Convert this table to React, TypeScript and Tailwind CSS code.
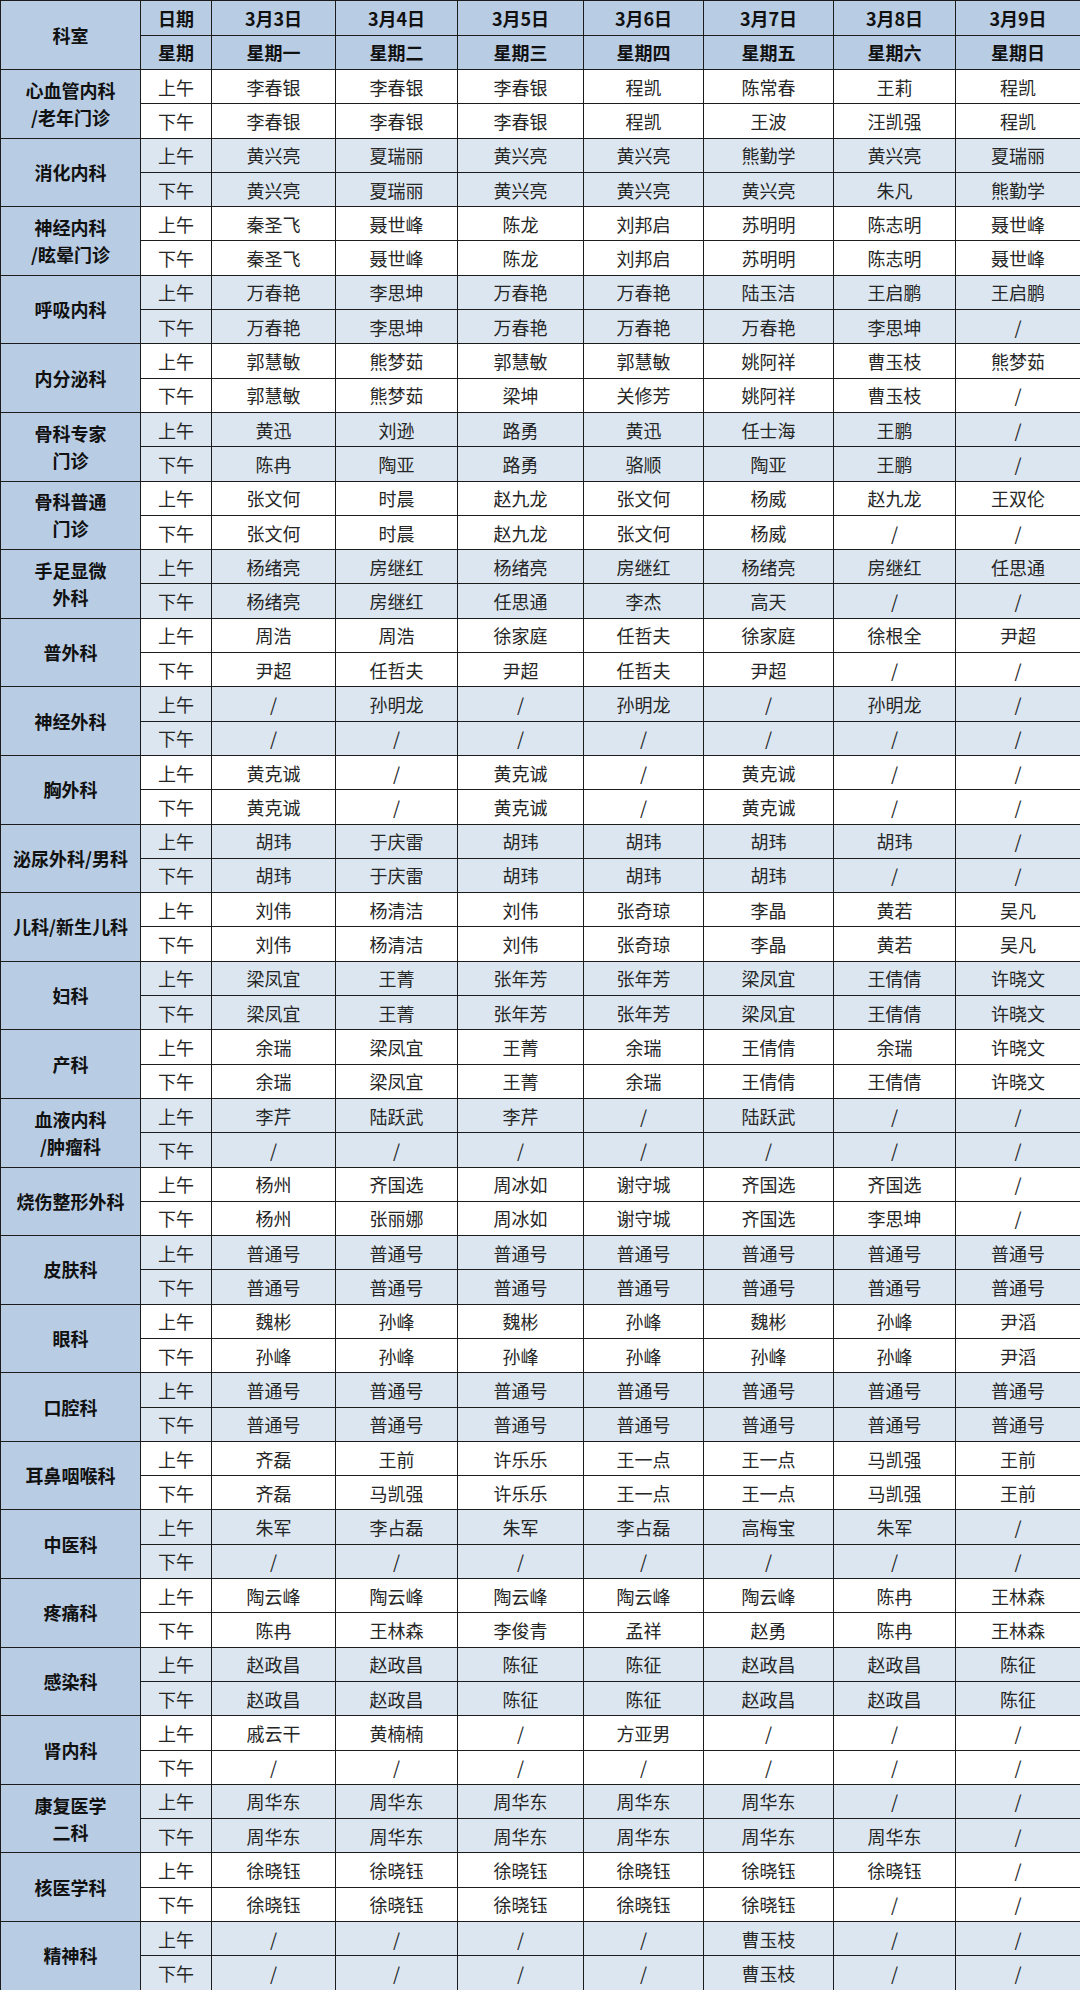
import React from 'react';

type Dept = { name: string[]; am: string[]; pm: string[] };

const S = '/';
const dates = ['3月3日', '3月4日', '3月5日', '3月6日', '3月7日', '3月8日', '3月9日'];
const weekdays = ['星期一', '星期二', '星期三', '星期四', '星期五', '星期六', '星期日'];
const colWidths = [140, 71, 124, 122, 126, 120, 130, 122, 125];

const depts: Dept[] = [
  {
    name: ['心血管内科', '/老年门诊'],
    am: ['李春银', '李春银', '李春银', '程凯', '陈常春', '王莉', '程凯'],
    pm: ['李春银', '李春银', '李春银', '程凯', '王波', '汪凯强', '程凯'],
  },
  {
    name: ['消化内科'],
    am: ['黄兴亮', '夏瑞丽', '黄兴亮', '黄兴亮', '熊勤学', '黄兴亮', '夏瑞丽'],
    pm: ['黄兴亮', '夏瑞丽', '黄兴亮', '黄兴亮', '黄兴亮', '朱凡', '熊勤学'],
  },
  {
    name: ['神经内科', '/眩晕门诊'],
    am: ['秦圣飞', '聂世峰', '陈龙', '刘邦启', '苏明明', '陈志明', '聂世峰'],
    pm: ['秦圣飞', '聂世峰', '陈龙', '刘邦启', '苏明明', '陈志明', '聂世峰'],
  },
  {
    name: ['呼吸内科'],
    am: ['万春艳', '李思坤', '万春艳', '万春艳', '陆玉洁', '王启鹏', '王启鹏'],
    pm: ['万春艳', '李思坤', '万春艳', '万春艳', '万春艳', '李思坤', S],
  },
  {
    name: ['内分泌科'],
    am: ['郭慧敏', '熊梦茹', '郭慧敏', '郭慧敏', '姚阿祥', '曹玉枝', '熊梦茹'],
    pm: ['郭慧敏', '熊梦茹', '梁坤', '关修芳', '姚阿祥', '曹玉枝', S],
  },
  {
    name: ['骨科专家', '门诊'],
    am: ['黄迅', '刘逊', '路勇', '黄迅', '任士海', '王鹏', S],
    pm: ['陈冉', '陶亚', '路勇', '骆顺', '陶亚', '王鹏', S],
  },
  {
    name: ['骨科普通', '门诊'],
    am: ['张文何', '时晨', '赵九龙', '张文何', '杨威', '赵九龙', '王双伦'],
    pm: ['张文何', '时晨', '赵九龙', '张文何', '杨威', S, S],
  },
  {
    name: ['手足显微', '外科'],
    am: ['杨绪亮', '房继红', '杨绪亮', '房继红', '杨绪亮', '房继红', '任思通'],
    pm: ['杨绪亮', '房继红', '任思通', '李杰', '高天', S, S],
  },
  {
    name: ['普外科'],
    am: ['周浩', '周浩', '徐家庭', '任哲夫', '徐家庭', '徐根全', '尹超'],
    pm: ['尹超', '任哲夫', '尹超', '任哲夫', '尹超', S, S],
  },
  {
    name: ['神经外科'],
    am: [S, '孙明龙', S, '孙明龙', S, '孙明龙', S],
    pm: [S, S, S, S, S, S, S],
  },
  {
    name: ['胸外科'],
    am: ['黄克诚', S, '黄克诚', S, '黄克诚', S, S],
    pm: ['黄克诚', S, '黄克诚', S, '黄克诚', S, S],
  },
  {
    name: ['泌尿外科/男科'],
    am: ['胡玮', '于庆雷', '胡玮', '胡玮', '胡玮', '胡玮', S],
    pm: ['胡玮', '于庆雷', '胡玮', '胡玮', '胡玮', S, S],
  },
  {
    name: ['儿科/新生儿科'],
    am: ['刘伟', '杨清洁', '刘伟', '张奇琼', '李晶', '黄若', '吴凡'],
    pm: ['刘伟', '杨清洁', '刘伟', '张奇琼', '李晶', '黄若', '吴凡'],
  },
  {
    name: ['妇科'],
    am: ['梁凤宜', '王菁', '张年芳', '张年芳', '梁凤宜', '王倩倩', '许晓文'],
    pm: ['梁凤宜', '王菁', '张年芳', '张年芳', '梁凤宜', '王倩倩', '许晓文'],
  },
  {
    name: ['产科'],
    am: ['余瑞', '梁凤宜', '王菁', '余瑞', '王倩倩', '余瑞', '许晓文'],
    pm: ['余瑞', '梁凤宜', '王菁', '余瑞', '王倩倩', '王倩倩', '许晓文'],
  },
  {
    name: ['血液内科', '/肿瘤科'],
    am: ['李芹', '陆跃武', '李芹', S, '陆跃武', S, S],
    pm: [S, S, S, S, S, S, S],
  },
  {
    name: ['烧伤整形外科'],
    am: ['杨州', '齐国选', '周冰如', '谢守城', '齐国选', '齐国选', S],
    pm: ['杨州', '张丽娜', '周冰如', '谢守城', '齐国选', '李思坤', S],
  },
  {
    name: ['皮肤科'],
    am: ['普通号', '普通号', '普通号', '普通号', '普通号', '普通号', '普通号'],
    pm: ['普通号', '普通号', '普通号', '普通号', '普通号', '普通号', '普通号'],
  },
  {
    name: ['眼科'],
    am: ['魏彬', '孙峰', '魏彬', '孙峰', '魏彬', '孙峰', '尹滔'],
    pm: ['孙峰', '孙峰', '孙峰', '孙峰', '孙峰', '孙峰', '尹滔'],
  },
  {
    name: ['口腔科'],
    am: ['普通号', '普通号', '普通号', '普通号', '普通号', '普通号', '普通号'],
    pm: ['普通号', '普通号', '普通号', '普通号', '普通号', '普通号', '普通号'],
  },
  {
    name: ['耳鼻咽喉科'],
    am: ['齐磊', '王前', '许乐乐', '王一点', '王一点', '马凯强', '王前'],
    pm: ['齐磊', '马凯强', '许乐乐', '王一点', '王一点', '马凯强', '王前'],
  },
  {
    name: ['中医科'],
    am: ['朱军', '李占磊', '朱军', '李占磊', '高梅宝', '朱军', S],
    pm: [S, S, S, S, S, S, S],
  },
  {
    name: ['疼痛科'],
    am: ['陶云峰', '陶云峰', '陶云峰', '陶云峰', '陶云峰', '陈冉', '王林森'],
    pm: ['陈冉', '王林森', '李俊青', '孟祥', '赵勇', '陈冉', '王林森'],
  },
  {
    name: ['感染科'],
    am: ['赵政昌', '赵政昌', '陈征', '陈征', '赵政昌', '赵政昌', '陈征'],
    pm: ['赵政昌', '赵政昌', '陈征', '陈征', '赵政昌', '赵政昌', '陈征'],
  },
  {
    name: ['肾内科'],
    am: ['戚云干', '黄楠楠', S, '方亚男', S, S, S],
    pm: [S, S, S, S, S, S, S],
  },
  {
    name: ['康复医学', '二科'],
    am: ['周华东', '周华东', '周华东', '周华东', '周华东', S, S],
    pm: ['周华东', '周华东', '周华东', '周华东', '周华东', '周华东', S],
  },
  {
    name: ['核医学科'],
    am: ['徐晓钰', '徐晓钰', '徐晓钰', '徐晓钰', '徐晓钰', '徐晓钰', S],
    pm: ['徐晓钰', '徐晓钰', '徐晓钰', '徐晓钰', '徐晓钰', S, S],
  },
  {
    name: ['精神科'],
    am: [S, S, S, S, '曹玉枝', S, S],
    pm: [S, S, S, S, '曹玉枝', S, S],
  },
];

const cell = 'border border-[#1c1c1c] p-0 text-center align-middle';
const head = `${cell} bg-[#b8cce4] font-bold text-[#111]`;

function SlotRow({ dept, slot, first, shaded }: { dept: Dept; slot: 'am' | 'pm'; first: boolean; shaded: boolean }) {
  const bg = shaded ? 'bg-[#dce6f1]' : 'bg-white';
  const names = slot === 'am' ? dept.am : dept.pm;
  return (
    <tr className="h-[34.3px]">
      {first && (
        <td rowSpan={2} className={`${head} leading-[27px]`}>
          {dept.name.map((line) => (
            <div key={line}>{line}</div>
          ))}
        </td>
      )}
      <td className={`${cell} ${bg} text-[#262626]`}>{slot === 'am' ? '上午' : '下午'}</td>
      {names.map((n, i) => (
        <td key={i} className={`${cell} ${bg} text-[#262626]`}>
          {n}
        </td>
      ))}
    </tr>
  );
}

export default function App() {
  return (
    <div className="w-[1080px] bg-white font-['Noto_Sans_CJK_SC','Noto_Sans',sans-serif] text-[18px] leading-none">
      <table className="w-[1080px] table-fixed border-collapse">
        <colgroup>
          {colWidths.map((w, i) => (
            <col key={i} style={{ width: w }} />
          ))}
        </colgroup>
        <thead>
          <tr className="h-[34.5px]">
            <th rowSpan={2} className={head}>
              科室
            </th>
            <th className={head}>日期</th>
            {dates.map((d) => (
              <th key={d} className={head}>
                {d}
              </th>
            ))}
          </tr>
          <tr className="h-[34.5px]">
            <th className={head}>星期</th>
            {weekdays.map((d) => (
              <th key={d} className={head}>
                {d}
              </th>
            ))}
          </tr>
        </thead>
        <tbody>
          {depts.map((dept, i) => (
            <React.Fragment key={dept.name.join('')}>
              <SlotRow dept={dept} slot="am" first shaded={i % 2 === 1} />
              <SlotRow dept={dept} slot="pm" first={false} shaded={i % 2 === 1} />
            </React.Fragment>
          ))}
        </tbody>
      </table>
    </div>
  );
}
